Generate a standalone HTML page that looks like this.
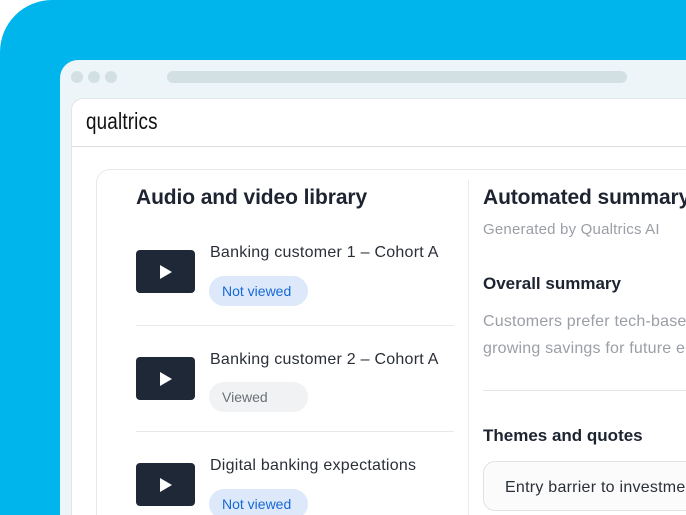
<!DOCTYPE html>
<html><head><style>
*{margin:0;padding:0;box-sizing:border-box}
html,body{width:686px;height:515px;overflow:hidden}
body{background:#fff;font-family:"Liberation Sans",sans-serif;position:relative}
.bg{position:absolute;left:0;top:0;width:686px;height:515px;background:#00b4ec;border-top-left-radius:52px}
.win{position:absolute;left:60px;top:60px;width:626px;height:455px;background:#eef5f8;border-top-left-radius:18px}
.dot{position:absolute;top:71px;width:12px;height:12px;border-radius:50%;background:#d2e0e4}
.url{position:absolute;left:167px;top:71px;width:460px;height:12px;border-radius:6px;background:#d2e0e4}
.panel{position:absolute;left:71px;top:98px;width:615px;height:417px;background:#fff;border:1px solid #dfe5e8;border-right:none;border-bottom:none;border-top-left-radius:12px}
.hdr{position:absolute;left:71px;top:146px;width:615px;height:1px;background:#d8dee2}
.logo{position:absolute;left:86px;top:108px;font-size:23px;color:#111;transform:scaleX(.82);transform-origin:left;letter-spacing:.2px}
.card{position:absolute;left:96px;top:169px;width:590px;height:346px;border:1px solid #e6eaed;border-right:none;border-bottom:none;border-top-left-radius:14px;background:#fff}
.vdiv{position:absolute;left:468px;top:180px;width:1px;height:335px;background:#e8ecee}
.t{position:absolute;white-space:nowrap;color:#1d2330}
.h{font-size:21px;font-weight:bold;letter-spacing:-.1px}
.th{position:absolute;left:136px;width:59px;height:43px;background:#1f2836;border-radius:4px}
.th:after{content:"";position:absolute;left:24px;top:15px;border-left:12px solid #fff;border-top:7px solid transparent;border-bottom:7px solid transparent}
.pill{position:absolute;left:209px;width:99px;height:30px;border-radius:15px;font-size:14px;padding-left:13px;line-height:30px}
.nv{background:#dde9fa;color:#1769d6}
.vw{background:#f1f2f4;color:#6b7078}
.sep{position:absolute;left:136px;width:318px;height:1px;background:#e6e9ec}
.it{font-size:16px;color:#2a2f38;letter-spacing:.25px}
.g{color:#9a9ea5;font-size:15px;letter-spacing:.2px}
.box{position:absolute;left:483px;top:461px;width:260px;height:50px;border:1px solid #dfe3e7;border-radius:12px;background:#fbfbfc}
</style></head><body>
<div class="bg"></div>
<div class="win"></div>
<div class="dot" style="left:71px"></div><div class="dot" style="left:88px"></div><div class="dot" style="left:105px"></div>
<div class="url"></div>
<div class="panel"></div>
<div class="hdr"></div>
<div class="logo">qualtrics</div>
<div class="card"></div>
<div class="vdiv"></div>
<div class="t h" style="left:136px;top:186px">Audio and video library</div>
<div class="th" style="top:250px"></div>
<div class="t it" style="left:210px;top:244px">Banking customer 1 – Cohort A</div>
<div class="pill nv" style="top:276px">Not viewed</div>
<div class="sep" style="top:325px"></div>
<div class="th" style="top:357px"></div>
<div class="t it" style="left:210px;top:351px">Banking customer 2 – Cohort A</div>
<div class="pill vw" style="top:382px">Viewed</div>
<div class="sep" style="top:431px"></div>
<div class="th" style="top:463px"></div>
<div class="t it" style="left:210px;top:457px">Digital banking expectations</div>
<div class="pill nv" style="top:489px">Not viewed</div>
<div class="t h" style="left:483px;top:186px">Automated summary</div>
<div class="t g" style="left:483px;top:221px">Generated by Qualtrics AI</div>
<div class="t" style="left:483px;top:274px;font-size:17px;font-weight:bold">Overall summary</div>
<div class="t g" style="left:483px;top:313px;font-size:16px">Customers prefer tech-based</div>
<div class="t g" style="left:483px;top:340px;font-size:16px">growing savings for future e</div>
<div style="position:absolute;left:483px;top:390px;width:220px;height:1px;background:#e3e6e9"></div>
<div class="t" style="left:483px;top:426px;font-size:17px;font-weight:bold">Themes and quotes</div>
<div class="box"></div>
<div class="t it" style="left:505px;top:479px">Entry barrier to investment</div>
</body></html>
